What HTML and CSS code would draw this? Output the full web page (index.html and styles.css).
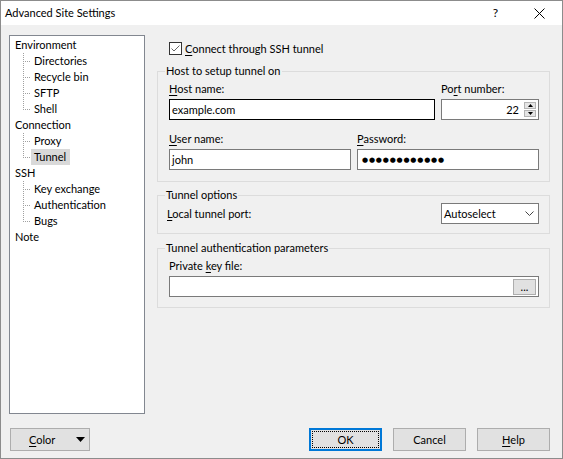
FILE: index.html
```html
<!DOCTYPE html>
<html>
<head>
<meta charset="utf-8">
<title>Advanced Site Settings</title>
<link rel="stylesheet" href="styles.css">
</head>
<body>
<div class="window">
  <div class="titlebar">
    <span class="title">Advanced Site Settings</span>
    <span class="help">?</span>
    <svg class="close" width="11" height="11" viewBox="0 0 11 11"><path d="M0.5 0.5 L10.5 10.5 M10.5 0.5 L0.5 10.5" stroke="#000" stroke-width="1" fill="none"/></svg>
  </div>
  <div class="body">
    <ul class="tree">
      <li class="node"><span class="lbl">Environment</span></li>
      <li class="child"><span class="branch"></span><span class="lbl">Directories</span></li>
      <li class="child"><span class="branch"></span><span class="lbl">Recycle bin</span></li>
      <li class="child"><span class="branch"></span><span class="lbl">SFTP</span></li>
      <li class="child last"><span class="branch"></span><span class="lbl">Shell</span></li>
      <li class="node"><span class="lbl">Connection</span></li>
      <li class="child"><span class="branch"></span><span class="lbl">Proxy</span></li>
      <li class="child last"><span class="branch"></span><span class="lbl sel">Tunnel</span></li>
      <li class="node"><span class="lbl">SSH</span></li>
      <li class="child"><span class="branch"></span><span class="lbl">Key exchange</span></li>
      <li class="child"><span class="branch"></span><span class="lbl">Authentication</span></li>
      <li class="child last"><span class="branch"></span><span class="lbl">Bugs</span></li>
      <li class="node"><span class="lbl">Note</span></li>
    </ul>
    <div class="panel">
      <div class="check-row">
        <span class="checkbox"><svg width="11" height="11" viewBox="0 0 11 11"><path d="M1.5 5.5 L4 8 L9.5 2.5" stroke="#666" stroke-width="1" fill="none"/></svg></span>
        <span class="check-label"><u>C</u>onnect through SSH tunnel</span>
      </div>

      <div class="group g1">
        <div class="group-title">Host to setup tunnel on</div>
        <div class="field-row">
          <div class="field host">
            <div class="label"><u>H</u>ost name:</div>
            <div class="input focused">example.com</div>
          </div>
          <div class="field port">
            <div class="label">Po<u>r</u>t number:</div>
            <div class="input spin">
              <span class="spin-value">22</span>
              <span class="spinner">
                <span class="spin-btn"><svg width="5" height="3" viewBox="0 0 5 3"><path d="M0 3 L2.5 0 L5 3 Z" fill="#000"/></svg></span>
                <span class="spin-btn"><svg width="5" height="3" viewBox="0 0 5 3"><path d="M0 0 L5 0 L2.5 3 Z" fill="#000"/></svg></span>
              </span>
            </div>
          </div>
        </div>
        <div class="field-row second">
          <div class="field half">
            <div class="label"><u>U</u>ser name:</div>
            <div class="input">john</div>
          </div>
          <div class="field half">
            <div class="label"><u>P</u>assword:</div>
            <div class="input"><span class="dots">●●●●●●●●●●●●</span></div>
          </div>
        </div>
      </div>

      <div class="group g2">
        <div class="group-title">Tunnel options</div>
        <div class="combo-row">
          <span class="label local"><u>L</u>ocal tunnel port:</span>
          <div class="combo">
            <span>Autoselect</span>
            <svg width="9" height="5" viewBox="0 0 9 5"><path d="M0.5 0.5 L4.5 4.5 L8.5 0.5" stroke="#444" stroke-width="1" fill="none"/></svg>
          </div>
        </div>
      </div>

      <div class="group g3">
        <div class="group-title">Tunnel authentication parameters</div>
        <div class="label">Private <u>k</u>ey file:</div>
        <div class="input file">
          <span class="file-value"></span>
          <span class="browse">...</span>
        </div>
      </div>
    </div>
  </div>
  <div class="buttons">
    <div class="btn color"><span><u>C</u>olor</span><svg width="9" height="5" viewBox="0 0 9 5"><path d="M0 0 L9 0 L4.5 5 Z" fill="#000"/></svg></div>
    <div class="btn ok"><span class="focus">OK</span></div>
    <div class="btn">Cancel</div>
    <div class="btn"><span><u>H</u>elp</span></div>
  </div>
</div>
</body>
</html>
```
FILE: styles.css
```css
* { box-sizing: border-box; }
html, body { margin: 0; padding: 0; }
body {
  font-family: Lato, "Liberation Sans", sans-serif;
  font-size: 11px;
  color: #000;
  background: #f0f0f0;
}
u { text-decoration: underline; text-underline-offset: 2px; text-decoration-thickness: 1px; }

.window {
  width: 563px;
  height: 459px;
  border: 1px solid #8c8c8c;
  background: #f0f0f0;
  display: flex;
  flex-direction: column;
}

.titlebar {
  height: 24px;
  flex: none;
  background: #fff;
  display: flex;
  align-items: center;
  padding-left: 4px;
  line-height: 16px;
}
.title { font-size: 11px; }
.help { margin-left: auto; font-size: 12px; }
.close { margin-left: 36px; margin-right: 17px; margin-top: 1px; }

.body {
  display: flex;
  padding: 10px 0 0 8px;
  flex: none;
}

.tree {
  list-style: none;
  margin: 0;
  padding: 1px 0 0 2px;
  width: 136px;
  height: 379px;
  border: 1px solid #828790;
  background: #fff;
  flex: none;
}
.tree li {
  height: 16px;
  line-height: 16px;
  display: flex;
  align-items: center;
}
.tree .lbl { padding: 0 3px; height: 16px; }
.tree .sel { background: #d9d9d9; padding-right: 4px; }
.branch {
  width: 8px;
  height: 16px;
  margin-left: 11px;
  flex: none;
  background-image:
    repeating-linear-gradient(to bottom, #a0a0a0 0 1px, transparent 1px 2px),
    repeating-linear-gradient(to right, #a0a0a0 0 1px, transparent 1px 2px);
  background-size: 1px 16px, 8px 1px;
  background-position: 0 0, 0 8px;
  background-repeat: no-repeat;
}
.child.last .branch { background-size: 1px 9px, 8px 1px; }

.panel {
  margin-left: 12px;
  width: 393px;
  flex: none;
}

.check-row {
  margin-top: 7px;
  height: 13px;
  padding-left: 12px;
  display: flex;
  align-items: center;
  line-height: 16px;
}
.checkbox {
  width: 13px;
  height: 13px;
  border: 1px solid #333;
  background: #fff;
  display: flex;
  flex: none;
}
.check-label { margin-left: 3px; }

.group {
  border: 1px solid #dcdcdc;
  padding: 0 10px 0 11px;
}
.group-title {
  margin-top: -9px;
  margin-left: -4px;
  padding: 0 1px;
  width: fit-content;
  background: #f0f0f0;
  line-height: 16px;
  height: 16px;
}
.g1 { margin-top: 16px; padding-bottom: 11px; }
.g2 { margin-top: 13px; padding-bottom: 9px; }
.g3 { margin-top: 14px; padding-bottom: 10px; }

.label { line-height: 16px; height: 16px; }
.field-row { display: flex; gap: 6px; margin-top: 2px; }
.field-row.second { margin-top: 11px; }
.field .label { margin-bottom: 2px; }
.host { width: 266px; }
.port { width: 98px; }
.half { width: 182px; }

.input {
  height: 21px;
  border: 1px solid #7a7a7a;
  background: #fff;
  padding: 0 2px;
  display: flex;
  align-items: center;
  line-height: 16px;
}
.input.focused { border-color: #000; }

.spin-value { flex: 1; text-align: right; margin-right: 5px; }
.spinner {
  width: 12px;
  height: 15px;
  display: flex;
  flex-direction: column;
  gap: 1px;
  flex: none;
}
.spin-btn {
  flex: 1;
  background: #e5e5e5;
  border: 1px solid #b4b4b4;
  display: flex;
  align-items: center;
  justify-content: center;
}

.dots {
  font-family: "DejaVu Sans", sans-serif;
  font-size: 7px;
  letter-spacing: 0.8px;
  padding-left: 2px;
}

.combo-row {
  display: flex;
  align-items: center;
  justify-content: space-between;
}
.local { margin-left: -2px; padding-top: 1px; height: 17px; }
.combo {
  width: 98px;
  height: 21px;
  border: 1px solid #7a7a7a;
  background: #fff;
  display: flex;
  align-items: center;
  justify-content: space-between;
  padding: 0 4px 1px 2px;
}
.combo svg { margin-top: 1px; }

.g3 .label { margin-top: 2px; }
.input.file { margin-top: 2px; padding-right: 2px; }
.file-value { flex: 1; }
.browse {
  width: 23px;
  height: 16px;
  background: #e1e1e1;
  border: 1px solid #adadad;
  font-size: 11px;
  line-height: 14px;
  text-align: center;
  flex: none;
}

.buttons {
  display: flex;
  margin-top: 14px;
  padding: 0 12px 0 9px;
  gap: 11px;
}
.btn {
  width: 73px;
  height: 23px;
  background: #e1e1e1;
  border: 1px solid #adadad;
  display: flex;
  align-items: center;
  justify-content: center;
  line-height: 16px;
}
.btn.color {
  width: 80px;
  justify-content: space-between;
  padding: 0 4px 0 18px;
  margin-right: auto;
}
.btn.ok {
  border: 2px solid #0078d7;
  padding: 1px;
}
.btn.ok .focus {
  flex: 1;
  align-self: stretch;
  border: 1px dotted #000;
  display: flex;
  align-items: center;
  justify-content: center;
}
```
